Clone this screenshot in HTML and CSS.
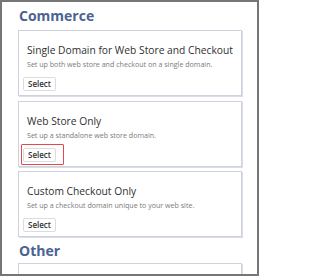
FILE: index.html
```html
<!DOCTYPE html>
<html>
<head>
<meta charset="utf-8">
<link rel="stylesheet" href="styles.css">
</head>
<body>
<div class="frame">
  <h2 class="section-title first">Commerce</h2>
  <div class="card">
    <div class="card-title">Single Domain for Web Store and Checkout</div>
    <div class="card-desc">Set up both web store and checkout on a single domain.</div>
    <button class="select-btn">Select</button>
  </div>
  <div class="card">
    <div class="card-title">Web Store Only</div>
    <div class="card-desc">Set up a standalone web store domain.</div>
    <button class="select-btn highlighted">Select</button>
  </div>
  <div class="card">
    <div class="card-title">Custom Checkout Only</div>
    <div class="card-desc">Set up a checkout domain unique to your web site.</div>
    <button class="select-btn">Select</button>
  </div>
  <h2 class="section-title second">Other</h2>
  <div class="card tall"></div>
</div>
</body>
</html>
```
FILE: styles.css
```css
html, body {
  margin: 0;
  padding: 0;
  background: #ffffff;
}
.frame {
  box-sizing: border-box;
  width: 259px;
  height: 276px;
  border: 2px solid #767676;
  padding: 0 15px 0 16px;
  overflow: hidden;
  font-family: "Open Sans", "Liberation Sans", sans-serif;
}
.section-title {
  margin: 0;
  font-size: 14px;
  line-height: 16px;
  font-weight: 700;
  color: #4b6391;
  padding: 6px 0 6px 1px;
}
.section-title.second {
  padding-top: 1.5px;
  padding-bottom: 4px;
}
.card {
  box-sizing: border-box;
  height: 66px;
  margin-bottom: 4.5px;
  border: 1px solid #cdd2dc;
  box-shadow: 1px 1px 0 #d9dde5;
  padding: 12px 8px 0 8px;
  background: #fff;
}
.card.tall {
  height: 40px;
}
.card-title {
  font-size: 10.25px;
  line-height: 14px;
  color: #2f2f2f;
  white-space: nowrap;
}
.card-desc {
  font-size: 7.1px;
  line-height: 10px;
  color: #7a7a7a;
  margin-top: 2px;
  white-space: nowrap;
}
.select-btn {
  position: relative;
  display: block;
  margin: 8px 0 0 -4px;
  height: 14px;
  padding: 0 4px;
  border: 1px solid #dcdcdc;
  border-radius: 2px;
  background: #fff;
  font-family: "Open Sans", "Liberation Sans", sans-serif;
  font-size: 8px;
  font-weight: 600;
  color: #333;
  line-height: 12px;
}
.select-btn.highlighted::after {
  content: "";
  position: absolute;
  left: -3px;
  right: -9px;
  top: -5px;
  bottom: -4px;
  border: 1.5px solid #e5484d;
  border-radius: 1px;
}
```
